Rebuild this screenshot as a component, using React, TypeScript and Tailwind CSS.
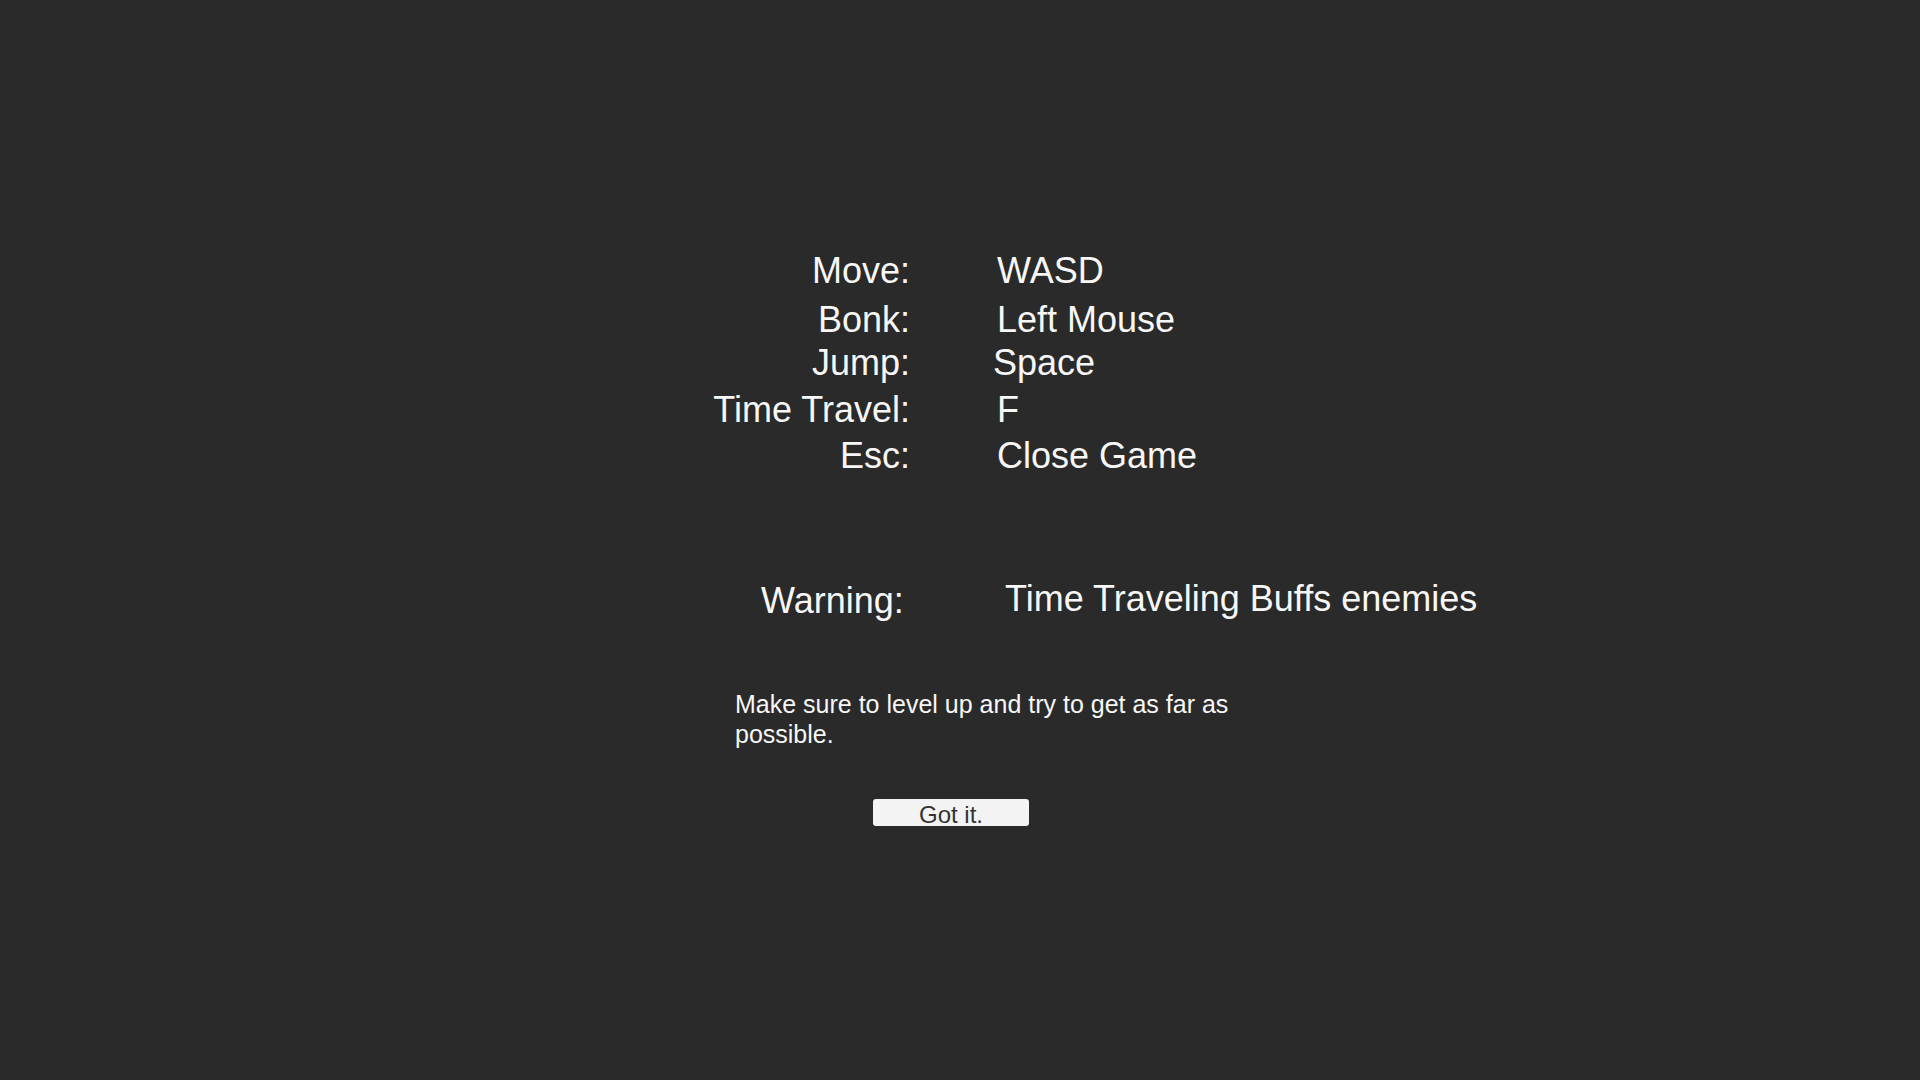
const keys = [
  { label: "Move:", value: "WASD", mt: "mt-0", ml: "ml-[87px]" },
  { label: "Bonk:", value: "Left Mouse", mt: "mt-[9px]", ml: "ml-[87px]" },
  { label: "Jump:", value: "Space", mt: "mt-[3px]", ml: "ml-[83px]" },
  { label: "Time Travel:", value: "F", mt: "mt-[7px]", ml: "ml-[87px]" },
  { label: "Esc:", value: "Close Game", mt: "mt-[6px]", ml: "ml-[87px]" },
]

export default function App() {
  return (
    <div className="h-[1080px] w-full overflow-hidden bg-[#2a2a2a] text-[#f7f7f7] font-['Liberation_Sans',Arial,sans-serif]">
      {/* CONTROLS */}
      <div className="ml-[700px] flex flex-col pt-[251px]">
        {keys.map((k) => (
          <div key={k.label} className={`flex text-[36px] leading-[40px] ${k.mt}`}>
            <span className="w-[210px] text-right">{k.label}</span>
            <span className={k.ml}>{k.value}</span>
          </div>
        ))}
      </div>

      {/* WARNING */}
      <div className="ml-[761px] mt-[105px] flex items-start">
        <span className="w-[244px] text-[36px] leading-[40px]">Warning:</span>
        <span className="-mt-[2px] text-[36px] leading-[40px]">Time Traveling Buffs enemies</span>
      </div>

      <p className="ml-[735px] mt-[68px] w-[520px] text-[25px] leading-[30px]">
        Make sure to level up and try to get as far as possible.
      </p>

      <button className="ml-[873px] mt-[50px] block h-[27px] w-[156px] rounded-[3px] bg-[#f3f3f3] pt-[4px] text-center text-[24px] leading-[24px] text-[#333333]">
        Got it.
      </button>
    </div>
  )
}
